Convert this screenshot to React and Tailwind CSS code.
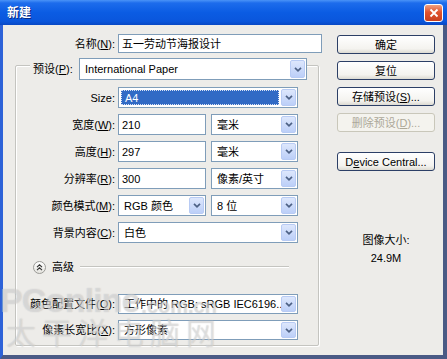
import React from "react";

function Arrow() {
  return (
    <div className="w-[15px] self-stretch my-px mr-px rounded-[2px] border border-[#b8cbf4] bg-[linear-gradient(to_bottom,#dde7fc,#bccff8)] flex items-center justify-center">
      <svg width="8" height="5" viewBox="0 0 8 5">
        <path d="M1 0.8 L4 3.8 L7 0.8" stroke="#4d6185" strokeWidth="1.7" fill="none" />
      </svg>
    </div>
  );
}

function Select({ className, children, highlight }) {
  return (
    <div className={"border border-[#7f9db9] bg-white flex items-stretch " + className}>
      {highlight ? (
        <div className="flex-1 m-[2px] bg-[#316ac5] text-white flex items-center pl-[4px] outline-1 outline-dotted outline-[#d8e2f5] -outline-offset-1">
          {children}
        </div>
      ) : (
        <div className="flex-1 flex items-center pl-[5px] whitespace-nowrap overflow-hidden">{children}</div>
      )}
      <Arrow />
    </div>
  );
}

function Input({ className, children }) {
  return (
    <div className={"border border-[#7f9db9] bg-white flex items-center pl-[3px] " + className}>{children}</div>
  );
}

function Row({ label, children, h }) {
  return (
    <div className={"flex items-center " + h}>
      <div className="w-[99px] text-right whitespace-nowrap">{label}</div>
      <div className="ml-[3px] flex gap-[5px] self-stretch">{children}</div>
    </div>
  );
}

function Btn({ children, disabled }) {
  return (
    <div
      className={
        "h-[19px] w-full rounded-[3px] border flex items-center justify-center whitespace-nowrap " +
        (disabled
          ? "border-[#c9c7ba] bg-[#f4f3ee] text-[#aca899]"
          : "border-[#2c3f66] bg-[linear-gradient(to_bottom,#ffffff,#f4f3ef_75%,#dcdad2)]")
      }
    >
      {children}
    </div>
  );
}

export default function App() {
  return (
    <div className="w-[447px] h-[359px] flex flex-col relative overflow-hidden text-[11px] leading-[12px] text-black font-['Liberation_Sans','Noto_Sans_CJK_SC',sans-serif]">
      {/* Title bar */}
      <div className="h-[25px] flex items-center bg-[linear-gradient(to_bottom,#4a93f7_0%,#1d6cec_12%,#0b5ce3_50%,#0a56dc_85%,#0848c4_100%)]">
        <span className="ml-[7px] text-white font-bold text-[12px] [text-shadow:1px_1px_0_#0a2a80]">新建</span>
        <div className="ml-auto mr-[4px] w-[19px] h-[18px] rounded-[3px] border border-white bg-[linear-gradient(to_bottom,#f0a080,#e0532f_45%,#c8401f)] flex items-center justify-center">
          <svg width="10" height="10" viewBox="0 0 10 10">
            <path d="M1.5 1.5 L8.5 8.5 M8.5 1.5 L1.5 8.5" stroke="white" strokeWidth="1.8" />
          </svg>
        </div>
      </div>

      {/* Body */}
      <div className="flex-1 flex bg-[#edece9] border-l-[3px] border-r-[4px] border-b-[4px] border-l-[#2d62d8] border-r-[#4a5a85] border-b-[#4a5a85]">
        {/* Left column */}
        <div className="w-[320px] flex flex-col">
          <div className="mt-[9px] flex items-center h-[19px]">
            <div className="w-[112px] text-right">
              名称(<u>N</u>):
            </div>
            <Input className="ml-[3px] w-[204px] self-stretch">五一劳动节海报设计</Input>
          </div>

          <div className="mt-[12px] ml-[12px] w-[304px] border border-[#c4c4c0] rounded-[2px] shadow-[inset_1px_1px_0_#ffffff,1px_1px_0_#ffffff] pb-[5px] flex flex-col">
            <div className="-mt-[8px] h-[22px] flex pl-[14px]">
              <div className="w-[49px] pl-[3px] bg-[#edece9] flex items-center whitespace-nowrap">
                预设(<u>P</u>):
              </div>
              <Select className="w-[228px]">International Paper</Select>
            </div>

            <div className="mt-[7px] flex flex-col gap-[6px]">
              <Row label="Size:" h="h-[21px]">
                <Select className="w-[180px]" highlight>
                  A4
                </Select>
              </Row>
              <Row label={<>宽度(<u>W</u>):</>} h="h-[21px]">
                <Input className="w-[88px]">210</Input>
                <Select className="w-[87px]">毫米</Select>
              </Row>
              <Row label={<>高度(<u>H</u>):</>} h="h-[21px]">
                <Input className="w-[88px]">297</Input>
                <Select className="w-[87px]">毫米</Select>
              </Row>
              <Row label={<>分辨率(<u>R</u>):</>} h="h-[21px]">
                <Input className="w-[88px]">300</Input>
                <Select className="w-[87px]">像素/英寸</Select>
              </Row>
              <Row label={<>颜色模式(<u>M</u>):</>} h="h-[21px]">
                <Select className="w-[88px]">RGB 颜色</Select>
                <Select className="w-[87px]">8 位</Select>
              </Row>
              <Row label={<>背景内容(<u>C</u>):</>} h="h-[21px]">
                <Select className="w-[180px]">白色</Select>
              </Row>
            </div>

            <div className="mt-[17px] h-[14px] flex items-center">
              <div className="ml-[17px] w-[13px] h-[13px] rounded-full border border-[#9a9a96] bg-[linear-gradient(to_bottom,#ffffff,#e4e3de)] flex items-center justify-center">
                <svg width="7" height="7" viewBox="0 0 7 7">
                  <path d="M1 3.2 L3.5 0.8 L6 3.2 M1 6.2 L3.5 3.8 L6 6.2" stroke="#333" strokeWidth="1.1" fill="none" />
                </svg>
              </div>
              <span className="ml-[6px]">高级</span>
              <div className="ml-[6px] mr-[29px] flex-1 h-[2px] border-t border-[#c4c4c0] bg-white" />
            </div>

            <div className="mt-[20px] flex flex-col gap-[6px]">
              <Row label={<>颜色配置文件(<u>O</u>):</>} h="h-[20px]">
                <Select className="w-[180px]">工作中的 RGB: sRGB IEC6196...</Select>
              </Row>
              <Row label={<>像素长宽比(<u>X</u>):</>} h="h-[20px]">
                <Select className="w-[180px]">方形像素</Select>
              </Row>
            </div>
          </div>
        </div>

        {/* Right column */}
        <div className="ml-[14px] w-[98px] pt-[10px] flex flex-col">
          <div className="flex flex-col gap-[7px]">
            <Btn>确定</Btn>
            <Btn>复位</Btn>
            <Btn>
              存储预设(<u>S</u>)...
            </Btn>
            <Btn disabled>
              删除预设(<u>D</u>)...
            </Btn>
          </div>
          <div className="mt-[20px]">
            <Btn>
              D<u>e</u>vice Central...
            </Btn>
          </div>
          <div className="mt-[63px] text-center">图像大小:</div>
          <div className="mt-[6px] text-center">24.9M</div>
        </div>
      </div>

      {/* Watermark */}
      <div className="absolute left-[0px] top-[283px] pointer-events-none select-none text-white/35 [text-shadow:0_0_1px_rgba(150,150,150,0.5)]">
        <div className="flex items-end font-['Liberation_Sans',sans-serif] font-bold">
          <span className="text-[34px] leading-[34px] tracking-[-1px]">PConline</span>
          <span className="text-[20px] leading-[22px] ml-[2px]">.com.cn</span>
        </div>
        <div className="ml-[6px] -mt-[2px] text-[30px] leading-[32px] tracking-[6px] font-['Noto_Sans_CJK_SC',sans-serif]">太平洋电脑网</div>
      </div>
    </div>
  );
}
